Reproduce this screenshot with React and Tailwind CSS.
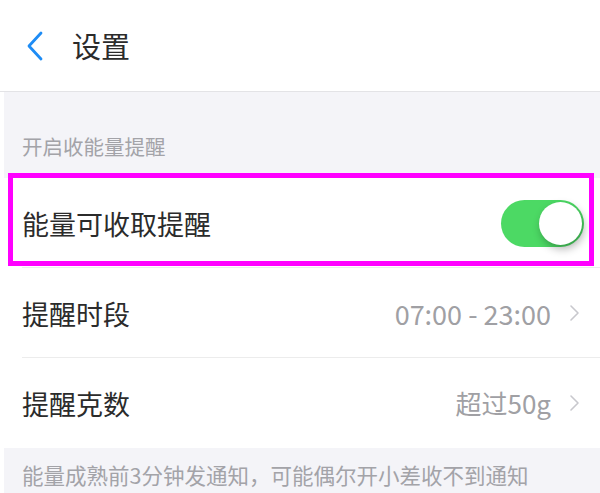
import React from "react";

const FONT = { fontFamily: '"Noto Sans CJK SC", "Noto Sans", sans-serif' };

function Chevron() {
  return (
    <svg width="11" height="18" viewBox="0 0 11 18" className="ml-[18px]">
      <path d="M2 2 L9 9 L2 16" fill="none" stroke="#c8c8cd" strokeWidth="1.6" strokeLinecap="round" strokeLinejoin="round" />
    </svg>
  );
}

function Toggle() {
  return (
    <div className="relative w-[83px] h-[47px] rounded-full bg-[#4cd964]">
      <div className="absolute right-[2px] top-[2px] w-[43px] h-[43px] rounded-full bg-white shadow-[2px_4px_8px_rgba(0,0,0,0.3)]" />
    </div>
  );
}

function Row({ label, children, divider }) {
  return (
    <div className="relative flex items-center justify-between h-[90px] pl-[22px] pr-[20px] bg-white">
      <span className="text-[27px] leading-none text-[#2b2b2b]">{label}</span>
      <div className="flex items-center">{children}</div>
      {divider && <div className="absolute left-[22px] right-0 bottom-0 h-px bg-[#ececec]" />}
    </div>
  );
}

export default function App() {
  return (
    <div className="relative w-[600px] h-[493px] overflow-hidden bg-white" style={FONT}>
      {/* header */}
      <div className="flex items-center h-[92px] border-b border-[#e3e3e6] pl-[26px]">
        <svg width="18" height="30" viewBox="0 0 18 30">
          <path d="M15 2 L3 15 L15 28" fill="none" stroke="#1e8cf5" strokeWidth="2.8" strokeLinecap="round" strokeLinejoin="round" />
        </svg>
        <span className="ml-[28px] text-[29px] leading-none text-[#2b2b2b]">设置</span>
      </div>

      <div className="ml-[4px] bg-[#f4f4f8] h-[86px] flex items-end pl-[18px] pb-[22px]">
        <span className="text-[20.5px] leading-none text-[#a3a3a8]">开启收能量提醒</span>
      </div>

      <div>
        <Row label="能量可收取提醒" divider>
          <div className="mr-[-4px]">
            <Toggle />
          </div>
        </Row>
        <Row label="提醒时段" divider>
          <span className="text-[27px] leading-none text-[#a0a0a4]">07:00 - 23:00</span>
          <Chevron />
        </Row>
        <Row label="提醒克数">
          <span className="text-[26px] leading-none text-[#a0a0a4]">超过50g</span>
          <Chevron />
        </Row>
      </div>

      <div className="ml-[4px] bg-[#f4f4f8] h-[60px] pl-[18px] pt-[16px]">
        <span className="text-[21.5px] leading-none text-[#a3a3a8] whitespace-nowrap">
          能量成熟前3分钟发通知，可能偶尔开小差收不到通知
        </span>
      </div>

      {/* highlight annotation */}
      <div className="absolute left-[8px] top-[173px] w-[586px] h-[93px] border-[5px] border-[#f0f] pointer-events-none" />
    </div>
  );
}
